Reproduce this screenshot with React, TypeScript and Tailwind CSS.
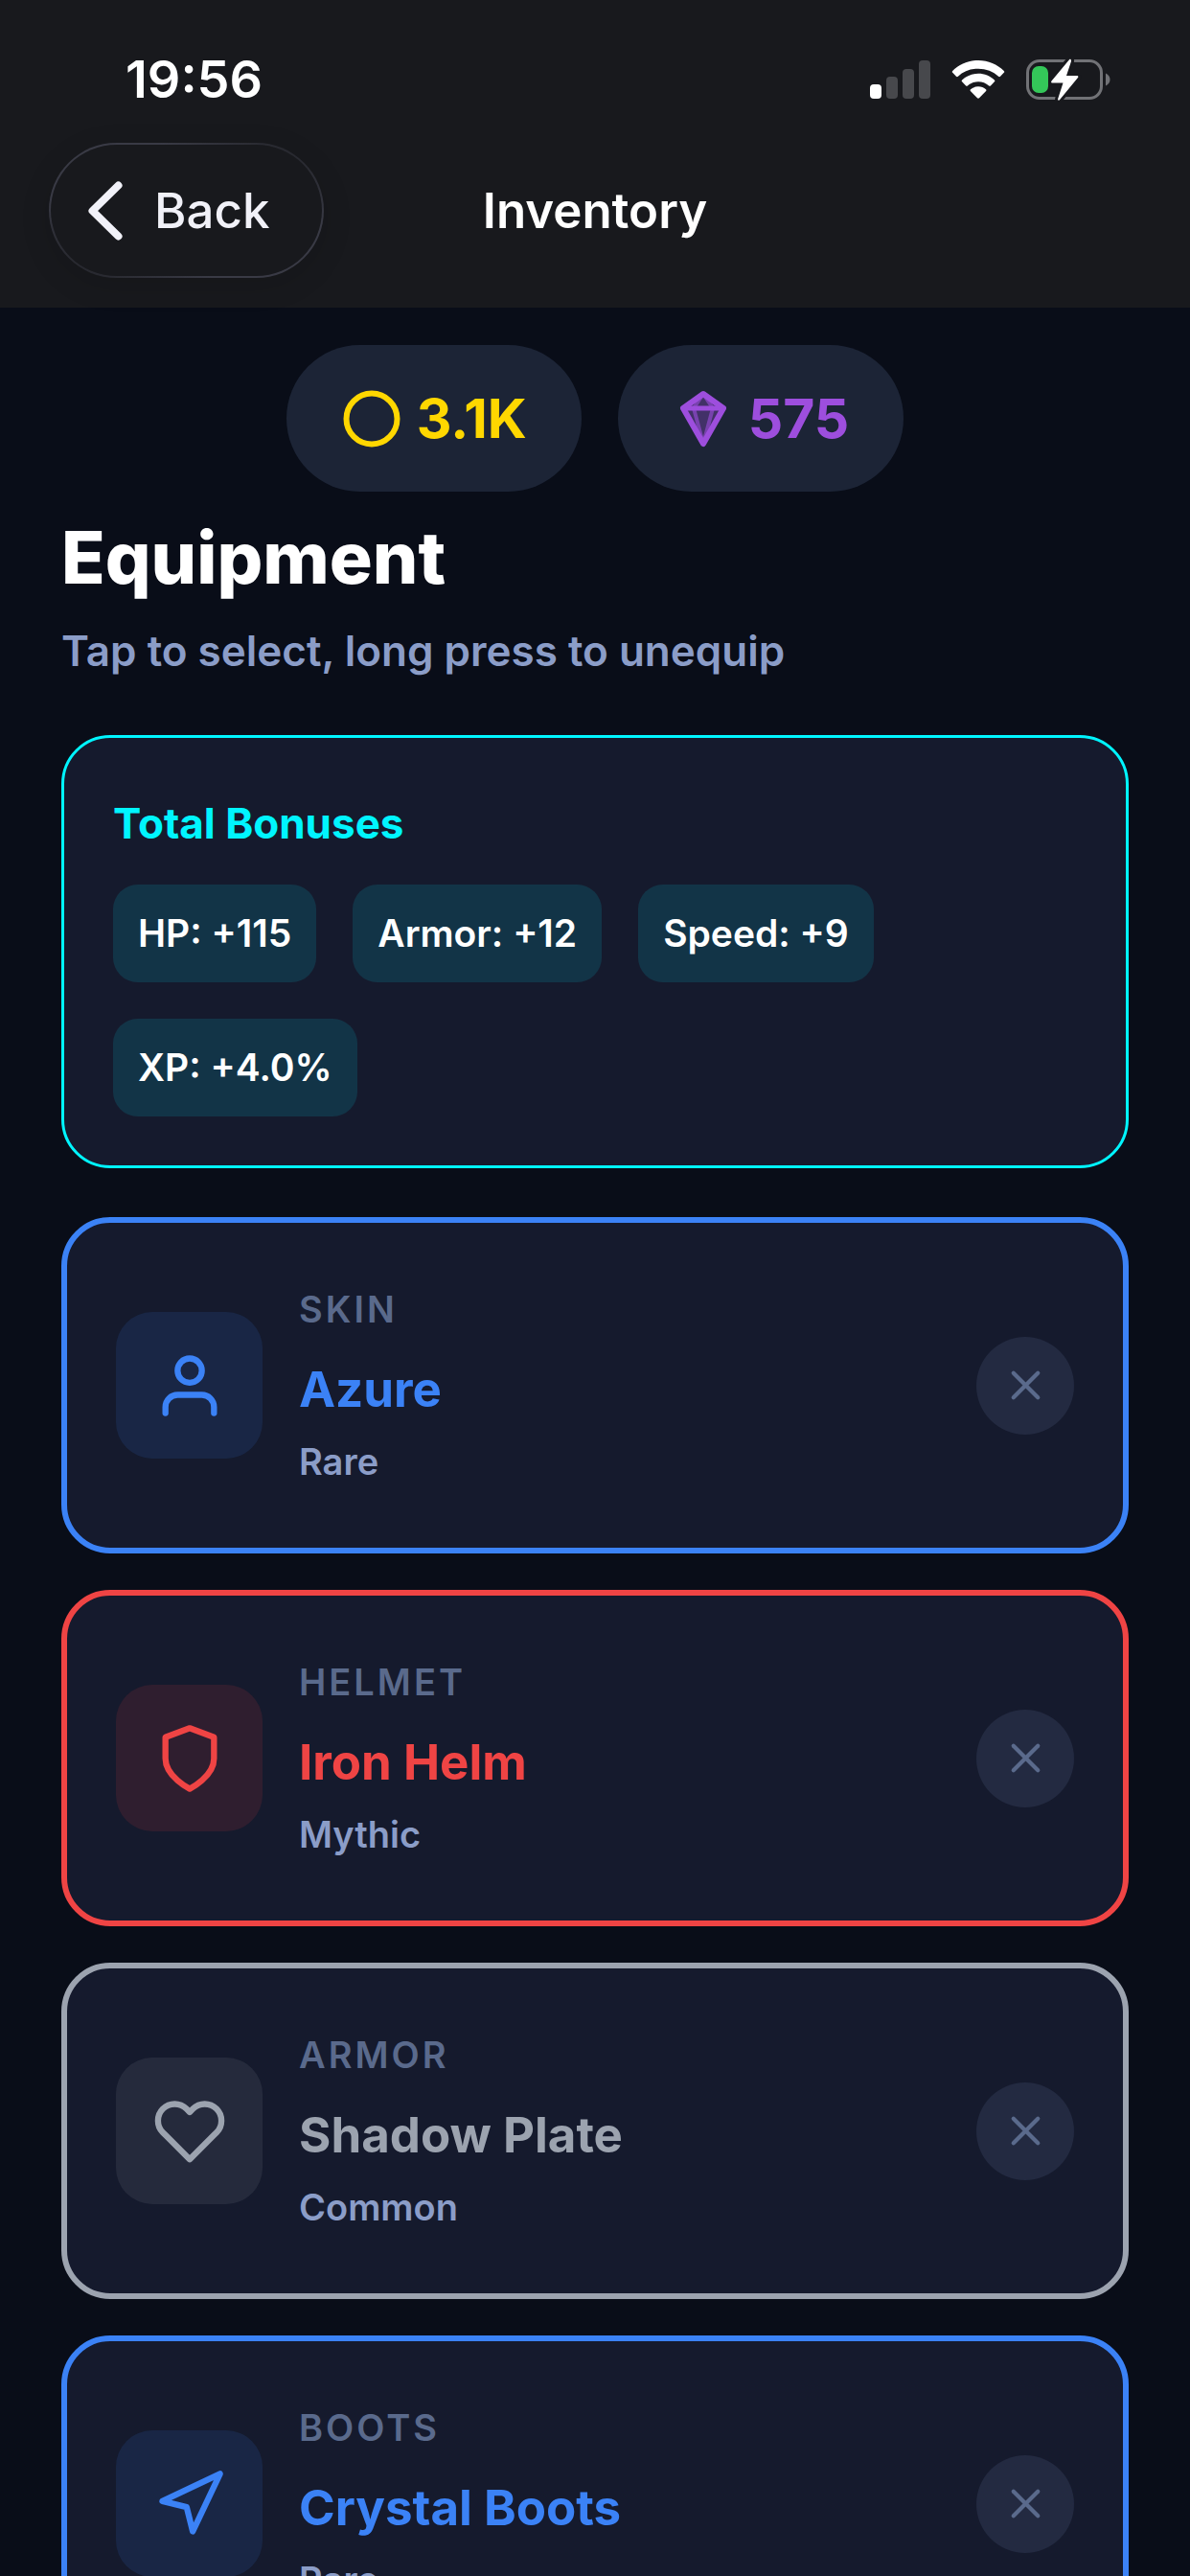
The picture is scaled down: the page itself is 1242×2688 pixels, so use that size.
import { FiHeart, FiNavigation, FiShield, FiUser, FiX } from "react-icons/fi";
import type { IconType } from "react-icons";

type Rarity = "Common" | "Rare" | "Mythic";

type EquipmentItem = {
  slot: string;
  name: string;
  rarity: Rarity;
  icon: IconType;
};

const BONUSES = [
  { label: "HP", value: "+115" },
  { label: "Armor", value: "+12" },
  { label: "Speed", value: "+9" },
  { label: "XP", value: "+4.0%" },
];

const EQUIPMENT: EquipmentItem[] = [
  { slot: "SKIN", name: "Azure", rarity: "Rare", icon: FiUser },
  { slot: "HELMET", name: "Iron Helm", rarity: "Mythic", icon: FiShield },
  { slot: "ARMOR", name: "Shadow Plate", rarity: "Common", icon: FiHeart },
  { slot: "BOOTS", name: "Crystal Boots", rarity: "Rare", icon: FiNavigation },
];

const RARITY_STYLES: Record<Rarity, { border: string; text: string; tile: string }> = {
  Common: { border: "border-[#9ca3af]", text: "text-[#9ca3af]", tile: "bg-[#9ca3af]/12" },
  Rare: { border: "border-[#3b82f6]", text: "text-[#3b82f6]", tile: "bg-[#3b82f6]/12" },
  Mythic: { border: "border-[#ef4444]", text: "text-[#ef4444]", tile: "bg-[#ef4444]/12" },
};

function SignalIcon() {
  return (
    <svg className="h-10 w-16" viewBox="0 0 64 40" aria-hidden="true">
      <rect x="1" y="25" width="12" height="15" rx="4" fill="#fff" />
      <rect x="18" y="17" width="12" height="23" rx="4" fill="#47484c" />
      <rect x="35" y="9" width="12" height="31" rx="4" fill="#47484c" />
      <rect x="52" y="0" width="12" height="40" rx="4" fill="#47484c" />
    </svg>
  );
}

function WifiIcon() {
  return (
    <svg className="h-10 w-14" viewBox="0 0 56 40" fill="#fff" aria-hidden="true">
      <path d="M28 0C17.500 0 8 4.200 1.200 11c-.6.6-.6 1.200 0 1.800l3.800 3.900c.6.6 1.300.6 1.900 0C12.400 11.500 19.800 8.700 28 8.700s15.600 2.800 21.100 8c.6.6 1.300.6 1.900 0l3.800-3.900c.6-.6.6-1.200 0-1.800C48 4.200 38.500 0 28 0Z" />
      <path d="M28 13.800c-6.600 0-12.500 2.500-16.900 6.700-.6.6-.6 1.200 0 1.800l4 4.100c.6.6 1.200.6 1.800 0 3-2.700 6.900-4.200 11.100-4.200s8.100 1.500 11.100 4.200c.6.6 1.200.6 1.800 0l4-4.100c.6-.6.6-1.200 0-1.800-4.400-4.200-10.300-6.700-16.900-6.700Z" />
      <path d="M28 27.300c-3.100 0-5.900 1.100-8 2.900-.6.5-.6 1.200-.1 1.700l7.100 7.400c.6.600 1.400.6 2 0l7.100-7.400c.5-.5.5-1.200-.1-1.700-2.100-1.800-4.900-2.900-8-2.900Z" />
    </svg>
  );
}

function BatteryIcon() {
  return (
    <svg className="h-[44px] w-[88px]" viewBox="0 0 88 44" aria-hidden="true">
      <rect x="1.500" y="2.500" width="77" height="39" rx="12.500" fill="none" stroke="#717276" strokeWidth="3" />
      <path d="M83 15.500c3 1.300 4.500 3.700 4.500 6.500s-1.500 5.200-4.500 6.500Z" fill="#717276" />
      <rect x="6" y="8" width="17" height="28" rx="7" fill="#34c759" />
      <path
        d="M45 1.200 26.500 23.500c-.8 1-.3 2 1 2h11L33.200 42c-.5 1.600.9 2.200 1.900 1L54 20c.8-1 .3-2-1-2H42L47 3c.4-1.800-1-3-2-1.800Z"
        fill="#fff"
        stroke="#18191d"
        strokeWidth="6"
        paintOrder="stroke"
      />
    </svg>
  );
}

function CoinIcon() {
  return (
    <svg className="size-16" viewBox="0 0 64 64" fill="none" aria-hidden="true">
      <circle cx="32" cy="32" r="26.500" stroke="#ffd700" strokeWidth="6" />
    </svg>
  );
}

function GemIcon() {
  return (
    <svg className="size-16" viewBox="0 0 64 64" fill="none" stroke="#9d4edd" strokeLinecap="round" strokeLinejoin="round" aria-hidden="true">
      <path d="M32 5.500 53 21 32 58.500 11 21Z" fill="#9d4edd" fillOpacity="0.300" stroke="none" />
      <path d="M32 6 22 21l10 37 10-37Z" strokeWidth="4" strokeOpacity="0.600" />
      <path d="M32 6 53 21 32 58 11 21Z" strokeWidth="6" />
      <path d="M11 21h42" strokeWidth="5" />
    </svg>
  );
}

function StatusBar() {
  return (
    <div className="flex h-[149px] items-center justify-between pt-4 pr-[83px] pl-[131px]">
      <time className="text-[54px] leading-[64px] font-semibold">19:56</time>
      <div className="flex items-center gap-[22px]">
        <SignalIcon />
        <WifiIcon />
        <BatteryIcon />
      </div>
    </div>
  );
}

function NavBar() {
  return (
    <nav className="grid grid-cols-[1fr_auto_1fr] items-center px-[51px] pb-[31px]">
      <button
        type="button"
        className="flex h-[141px] w-[287px] items-center gap-8 rounded-full border-2 border-transparent [background:linear-gradient(#18191d,#18191d)_padding-box,linear-gradient(to_top_right,#202126,#393a45_30%,#393a45_70%,#202126)_border-box] pl-[38px] text-[51px] leading-[64px] font-medium text-[#f1f1f8] shadow-[0_8px_32px_rgba(0,0,0,0.12)]"
      >
        <svg className="h-[62px] w-[38px]" viewBox="0 0 38 62" fill="none" aria-hidden="true">
          <path d="M32.500 4.500 5.500 31l27 26.500" stroke="currentColor" strokeWidth="8" strokeLinecap="round" strokeLinejoin="round" />
        </svg>
        Back
      </button>
      <h1 className="text-[51px] leading-[64px] font-semibold">Inventory</h1>
    </nav>
  );
}

function EquipmentCard({ item }: { item: EquipmentItem }) {
  const styles = RARITY_STYLES[item.rarity];
  const Icon = item.icon;

  return (
    <li className={`flex items-center gap-[38px] rounded-[51px] border-6 bg-[#151a2d] px-[51px] py-[66px] ${styles.border}`}>
      <span className={`flex size-[153px] shrink-0 items-center justify-center rounded-[38px] ${styles.tile} ${styles.text}`}>
        <Icon className="size-[76px]" aria-hidden="true" />
      </span>
      <div className="min-w-0 flex-1">
        <p className="text-[38px] leading-[48px] font-semibold tracking-[3px] text-[#5a6a8c]">{item.slot}</p>
        <h3 className={`mt-7 text-[51px] leading-[63px] font-bold ${styles.text}`}>{item.name}</h3>
        <p className="mt-5 text-[38px] leading-[48px] font-semibold text-[#8b9dc8]">{item.rarity}</p>
      </div>
      <button
        type="button"
        aria-label={`Unequip ${item.name}`}
        className="flex size-[102px] shrink-0 items-center justify-center rounded-full bg-[#232a41] text-[#5a6a8c]"
      >
        <FiX className="size-[51px]" aria-hidden="true" />
      </button>
    </li>
  );
}

export default function App() {
  return (
    <div className="flex h-screen flex-col overflow-hidden bg-[#090d18] font-['Inter',sans-serif] text-white">
      <header className="shrink-0 bg-[#18191d]">
        <StatusBar />
        <NavBar />
      </header>

      <main className="min-h-0 flex-1 overflow-y-auto px-16 pt-[39px] [scrollbar-width:none]">
        <div className="flex justify-center gap-[38px] text-[57px] leading-[64px] font-bold">
          <div className="flex h-[153px] items-center gap-[15px] rounded-full bg-[#1c2436] px-[57px] text-[#ffd700]">
            <CoinIcon />
            3.1K
          </div>
          <div className="flex h-[153px] items-center gap-[15px] rounded-full bg-[#1c2436] px-[57px] text-[#9d4edd]">
            <GemIcon />
            575
          </div>
        </div>

        <h2 className="mt-6 text-[75px] leading-[90px] font-extrabold">Equipment</h2>
        <p className="mt-6 text-[44px] leading-[56px] font-semibold text-[#8b9dc8]">Tap to select, long press to unequip</p>

        <section className="mt-[60px] rounded-[51px] border-3 border-[#00f5ff] bg-[#151a2d] p-[51px]">
          <h3 className="text-[44px] leading-[76px] font-bold text-[#00f5ff]">Total Bonuses</h3>
          <ul className="mt-[26px] flex flex-wrap gap-[38px]">
            {BONUSES.map((bonus) => (
              <li
                key={bonus.label}
                className="flex h-[102px] items-center rounded-[26px] bg-[#00f5ff]/12 px-[26px] text-[39px] leading-[48px] font-semibold"
              >
                {bonus.label}: {bonus.value}
              </li>
            ))}
          </ul>
        </section>

        <ul className="mt-[51px] flex flex-col gap-[38px] pb-16">
          {EQUIPMENT.map((item) => (
            <EquipmentCard key={item.slot} item={item} />
          ))}
        </ul>
      </main>
    </div>
  );
}
